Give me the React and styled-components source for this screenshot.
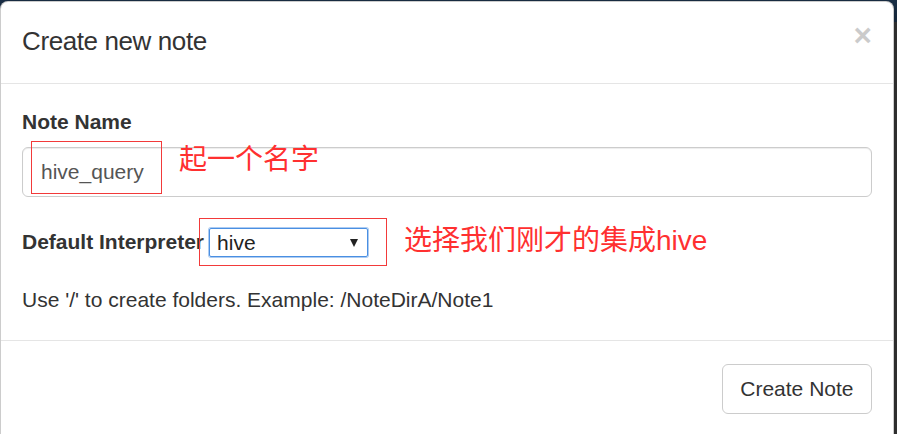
import React from 'react';
import styled, { createGlobalStyle } from 'styled-components';

const GlobalStyle = createGlobalStyle`
	* { box-sizing: border-box; }
	html, body {
		margin: 0;
		padding: 0;
		height: 100%;
		overflow: hidden;
		background: linear-gradient(to bottom, #1b3149 0, #1b3149 22px, #3a3a3a 22px);
		font-family: "Liberation Sans", Arial, sans-serif;
		color: #333;
	}
`;

const App = () => {
	return (
		<>
			<GlobalStyle />
			<S.Page>
				<S.Modal>
					<S.Header>
						<S.Title>Create new note</S.Title>
						<S.Close aria-label='Close'>×</S.Close>
					</S.Header>
					<S.Body>
						<S.Field>
							<S.Label>Note Name</S.Label>
							<S.InputWrap>
								<S.Highlight />
								<S.Input defaultValue='hive_query' />
								<S.InputNote>起一个名字</S.InputNote>
							</S.InputWrap>
						</S.Field>
						<S.InlineField>
							<S.Label $inline>Default Interpreter</S.Label>
							<S.Frame>
								<S.Select>
									<span>hive</span>
									<S.Caret />
								</S.Select>
							</S.Frame>
							<S.Note>选择我们刚才的集成hive</S.Note>
						</S.InlineField>
						<S.Help>Use '/' to create folders. Example: /NoteDirA/Note1</S.Help>
					</S.Body>
					<S.Footer>
						<S.Button>Create Note</S.Button>
					</S.Footer>
				</S.Modal>
			</S.Page>
		</>
	);
};

export default App;

const S = {};

S.Page = styled.div`
	width: 897px;
	height: 434px;
	padding-top: 1px;
`;

S.Modal = styled.section`
	width: 894px;
	background: #fff;
	border: 1px solid rgba(0, 0, 0, 0.2);
	border-radius: 8px 8px 0 0;
	box-shadow: 0 5px 15px rgba(0, 0, 0, 0.5);
`;

S.Header = styled.header`
	display: flex;
	justify-content: space-between;
	align-items: flex-start;
	padding: 24px 21px 27px;
	border-bottom: 1px solid #e5e5e5;
`;

S.Title = styled.h4`
	margin: 0;
	font-size: 26px;
	font-weight: 400;
	letter-spacing: -0.4px;
	line-height: 30px;
	color: #333;
`;

S.Close = styled.button`
	margin-top: -6px;
	padding: 0;
	border: 0;
	background: transparent;
	font-family: "Liberation Sans", Arial, sans-serif;
	font-size: 31.5px;
	font-weight: 700;
	line-height: 1;
	color: #000;
	opacity: 0.2;
	cursor: pointer;
`;

S.Body = styled.div`
	padding: 23px 21px 25px;
`;

S.Field = styled.div`
	margin-bottom: 30px;
`;

S.InputWrap = styled.div`
	position: relative;
`;

S.InlineField = styled.div`
	display: flex;
	align-items: center;
	height: 30px;
`;

S.Label = styled.label`
	display: block;
	margin-bottom: ${p => (p.$inline ? '0' : '10px')};
	font-size: 21px;
	font-weight: 700;
	line-height: 30px;
	color: #333;
`;

S.Input = styled.input`
	display: block;
	width: 100%;
	height: 50px;
	padding: 0 18px;
	border: 1px solid #ccc;
	border-radius: 6px;
	box-shadow: inset 0 1px 1px rgba(0, 0, 0, 0.075);
	font-family: "Liberation Sans", Arial, sans-serif;
	font-size: 21px;
	color: #555;
	outline: none;
`;

// red annotation frame laid over the name input
S.Highlight = styled.div`
	position: absolute;
	z-index: 3;
	top: -6px;
	left: 9px;
	width: 131px;
	height: 53px;
	color: #f23a3a;
	box-shadow: inset 0 0 0 1px #f23a3a;
	pointer-events: none;
`;

S.Frame = styled.div`
	margin-left: -5px;
	padding: 9px 18px 8px 9px;
	border: 1px solid #f23a3a;
`;

S.Select = styled.div`
	display: flex;
	align-items: center;
	justify-content: space-between;
	width: 159px;
	height: 29px;
	padding: 0 9px 0 7px;
	border: 1px solid #4a8fe2;
	border-radius: 2px;
	box-shadow: 0 0 0 1px rgba(74, 143, 226, 0.45);
	font-size: 21px;
	color: #222;
`;

S.Caret = styled.i`
	width: 0;
	height: 0;
	border-left: 4.5px solid transparent;
	border-right: 4.5px solid transparent;
	border-top: 8px solid #222;
`;

S.Note = styled.span`
	margin: -3px 0 0 17px;
	font-family: "Liberation Sans", "Noto Sans CJK SC", sans-serif;
	font-size: 28px;
	line-height: 28px;
	white-space: nowrap;
	color: #ff3030;
`;

S.InputNote = styled(S.Note)`
	position: absolute;
	z-index: 2;
	top: -1px;
	left: 157px;
	margin: 0;
`;

S.Help = styled.p`
	margin: 28px 0 0;
	font-size: 21px;
	line-height: 30px;
	color: #333;
`;

S.Footer = styled.footer`
	display: flex;
	justify-content: flex-end;
	padding: 23px 21px;
	border-top: 1px solid #e5e5e5;
`;

S.Button = styled.button`
	height: 50px;
	padding: 0 17.5px;
	background: #fff;
	border: 1px solid #ccc;
	border-radius: 6px;
	font-family: "Liberation Sans", Arial, sans-serif;
	font-size: 21px;
	color: #333;
	cursor: pointer;
`;
